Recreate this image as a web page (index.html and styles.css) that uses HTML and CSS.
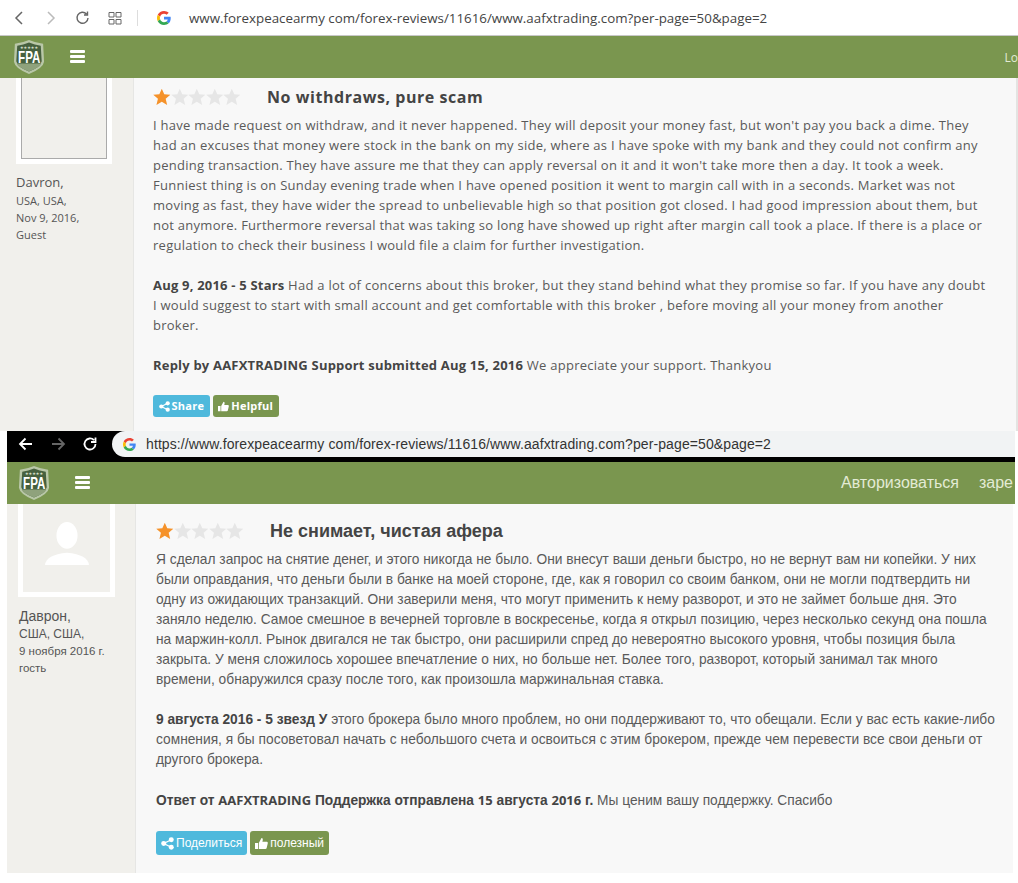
FILE: index.html
```html
<!DOCTYPE html>
<html lang="en">
<head>
  <meta charset="UTF-8">
  <title>Forex Peace Army reviews</title>
  <link rel="stylesheet" href="styles.css">
</head>
<body>
<svg class="defs">
  <symbol id="shield" viewBox="0 0 34 38">
    <path d="M2 5 Q10 4 17 1 Q24 4 32 5 L33 24 Q32 31 17 37 Q2 31 1 24 Z" fill="#b9c7a8"/>
    <path d="M4.500 7 Q11 6 17 3.500 Q23 6 29.500 7 L30.500 23.500 Q29.500 29.500 17 34.500 Q4.500 29.500 3.500 23.500 Z" fill="#46603f"/>
    <path d="M4 26 H30 L28.500 28.500 Q24 31.500 17 34.500 Q10 31.500 5.500 28.500 Z" fill="#8fa27c"/>
  </symbol>
  <symbol id="star" viewBox="0 0 20 20">
    <path d="M10 0.500 L12.800 6.900 L19.700 7.500 L14.400 12 L16.100 19 L10 15.300 L3.900 19 L5.600 12 L0.300 7.500 L7.200 6.900 Z"/>
  </symbol>
  <symbol id="share" viewBox="0 0 12 12">
    <circle cx="9.500" cy="2.500" r="2.300"/><circle cx="2.500" cy="6" r="2.300"/><circle cx="9.500" cy="9.500" r="2.300"/>
    <path d="M9.500 2.500 L2.500 6 L9.500 9.500" fill="none" stroke="currentColor" stroke-width="1.200"/>
  </symbol>
  <symbol id="thumb" viewBox="0 0 13 12">
    <path d="M0 5.500 H3 V11.500 H0 Z M3.800 5.500 L6.500 0.500 Q8.200 0.600 7.800 2.600 L7.400 4.300 H12 Q13 4.600 12.800 5.800 L11.600 10.800 Q11.300 11.500 10.400 11.500 H3.800 Z"/>
  </symbol>
  <symbol id="google" viewBox="0 0 48 48">
    <path fill="#ea4335" d="M24 9.500c3.500 0 6.700 1.200 9.200 3.600l6.900-6.900C35.900 2.400 30.500 0 24 0 14.600 0 6.500 5.400 2.600 13.200l8 6.200C12.400 13.700 17.700 9.500 24 9.500z"/>
    <path fill="#4285f4" d="M47 24.500c0-1.600-.1-3.100-.4-4.500H24v9h12.900c-.6 3-2.200 5.500-4.700 7.200l7.700 6C44.400 38 47 31.800 47 24.500z"/>
    <path fill="#fbbc05" d="M10.600 28.600c-.5-1.400-.8-3-.8-4.600s.3-3.200.8-4.600l-8-6.200C.9 16.500 0 20.100 0 24s.9 7.500 2.600 10.800l8-6.200z"/>
    <path fill="#34a853" d="M24 48c6.500 0 11.900-2.100 15.900-5.800l-7.700-6c-2.200 1.400-4.900 2.300-8.200 2.300-6.300 0-11.600-4.200-13.400-9.900l-8 6.200C6.500 42.600 14.600 48 24 48z"/>
  </symbol>
</svg>

<section class="shot shot-en">
  <div class="chrome-light">
    <svg class="tool" viewBox="0 0 16 16"><path d="M11 2 L5 8 L11 14" fill="none" stroke="#666" stroke-width="1.500"/></svg>
    <svg class="tool gap-forward" viewBox="0 0 16 16"><path d="M5 2 L11 8 L5 14" fill="none" stroke="#bbb" stroke-width="1.500"/></svg>
    <svg class="tool gap-reload" viewBox="0 0 16 16"><path d="M13 8 A5.500 5.500 0 1 1 11.500 4 M12.500 1.500 V5 H9" fill="none" stroke="#666" stroke-width="1.400"/></svg>
    <svg class="tool gap-apps" viewBox="0 0 16 16"><path d="M2 2.500 H7 V7 H2 Z M9 2.500 H14 V7 H9 Z M2 9.500 H7 V14 H2 Z M9 9.500 H14 V14 H9 Z" fill="none" stroke="#666"/></svg>
    <span class="divider"></span>
    <svg class="g-logo"><use href="#google"/></svg>
    <span class="url">www.forexpeacearmy com/forex-reviews/11616/www.aafxtrading.com?per-page=50&amp;page=2</span>
  </div>
  <nav class="topnav">
    <div class="logo"><svg class="logo-shield"><use href="#shield"/></svg><span class="logo-stars">★★★★★</span><span class="logo-text">FPA</span></div>
    <div class="burger"><i></i><i></i><i></i></div>
    <div class="nav-links"><span>Lo</span></div>
  </nav>
  <div class="review">
    <aside class="author">
      <div class="avatar avatar-en"><div class="avatar-inner"></div></div>
      <div class="name">Davron,</div>
      <div class="meta">USA, USA,</div>
      <div class="meta">Nov 9, 2016,</div>
      <div class="meta">Guest</div>
    </aside>
    <article class="body">
      <div class="review-head">
        <span class="stars">
          <svg class="on"><use href="#star"/></svg><svg><use href="#star"/></svg><svg><use href="#star"/></svg><svg><use href="#star"/></svg><svg><use href="#star"/></svg>
        </span>
        <h3>No withdraws, pure scam</h3>
      </div>
      <p>I have made request on withdraw, and it never happened. They will deposit your money fast, but won't pay you back a dime. They<br>
      had an excuses that money were stock in the bank on my side, where as I have spoke with my bank and they could not confirm any<br>
      pending transaction. They have assure me that they can apply reversal on it and it won't take more then a day. It took a week.<br>
      Funniest thing is on Sunday evening trade when I have opened position it went to margin call with in a seconds. Market was not<br>
      moving as fast, they have wider the spread to unbelievable high so that position got closed. I had good impression about them, but<br>
      not anymore. Furthermore reversal that was taking so long have showed up right after margin call took a place. If there is a place or<br>
      regulation to check their business I would file a claim for further investigation.</p>
      <p><b>Aug 9, 2016 - 5 Stars</b> Had a lot of concerns about this broker, but they stand behind what they promise so far. If you have any doubt<br>
      I would suggest to start with small account and get comfortable with this broker , before moving all your money from another<br>
      broker.</p>
      <p><b>Reply by AAFXTRADING Support submitted Aug 15, 2016</b> We appreciate your support. Thankyou</p>
      <div class="actions">
        <span class="btn btn-share"><svg><use href="#share"/></svg>Share</span>
        <span class="btn btn-helpful"><svg><use href="#thumb"/></svg>Helpful</span>
      </div>
    </article>
  </div>
</section>

<section class="shot shot-ru">
  <div class="chrome-dark">
    <svg class="tool" viewBox="0 0 16 16"><path d="M14 8 H2 M7.500 2.500 L2 8 L7.500 13.500" fill="none" stroke="#fff" stroke-width="1.800"/></svg>
    <svg class="tool gap-forward-dark" viewBox="0 0 16 16"><path d="M2 8 H14 M8.500 2.500 L14 8 L8.500 13.500" fill="none" stroke="#666" stroke-width="1.800"/></svg>
    <svg class="tool gap-reload-dark" viewBox="0 0 16 16"><path d="M13.500 8 A5.500 5.500 0 1 1 12 4.200 M13.500 1.500 V6 H9" fill="none" stroke="#fff" stroke-width="1.800"/></svg>
    <div class="omnibox">
      <svg class="g-logo-dark"><use href="#google"/></svg>
      <span class="url-dark">https://www.forexpeacearmy com/forex-reviews/11616/www.aafxtrading.com?per-page=50&amp;page=2</span>
    </div>
  </div>
  <nav class="topnav">
    <div class="logo"><svg class="logo-shield"><use href="#shield"/></svg><span class="logo-stars">★★★★★</span><span class="logo-text">FPA</span></div>
    <div class="burger"><i></i><i></i><i></i></div>
    <div class="nav-links nav-links-ru"><span>Авторизоваться</span><span>заре</span></div>
  </nav>
  <div class="review">
    <aside class="author">
      <div class="avatar avatar-ru">
        <div class="avatar-inner">
          <svg class="silhouette" viewBox="0 0 48 48"><ellipse cx="24" cy="15" rx="11" ry="14" fill="#fff"/><path d="M1 46 Q2 35 24 33 Q46 35 47 46 Z" fill="#fff"/></svg>
        </div>
      </div>
      <div class="name">Даврон,</div>
      <div class="meta">США, США,</div>
      <div class="meta meta-small">9 ноября 2016 г.</div>
      <div class="meta meta-small">гость</div>
    </aside>
    <article class="body">
      <div class="review-head">
        <span class="stars">
          <svg class="on"><use href="#star"/></svg><svg><use href="#star"/></svg><svg><use href="#star"/></svg><svg><use href="#star"/></svg><svg><use href="#star"/></svg>
        </span>
        <h3>Не снимает, чистая афера</h3>
      </div>
      <p>Я сделал запрос на снятие денег, и этого никогда не было. Они внесут ваши деньги быстро, но не вернут вам ни копейки. У них<br>
      были оправдания, что деньги были в банке на моей стороне, где, как я говорил со своим банком, они не могли подтвердить ни<br>
      одну из ожидающих транзакций. Они заверили меня, что могут применить к нему разворот, и это не займет больше дня. Это<br>
      заняло неделю. Самое смешное в вечерней торговле в воскресенье, когда я открыл позицию, через несколько секунд она пошла<br>
      на маржин-колл. Рынок двигался не так быстро, они расширили спред до невероятно высокого уровня, чтобы позиция была<br>
      закрыта. У меня сложилось хорошее впечатление о них, но больше нет. Более того, разворот, который занимал так много<br>
      времени, обнаружился сразу после того, как произошла маржинальная ставка.</p>
      <p><b>9 августа 2016 - 5 звезд У</b> этого брокера было много проблем, но они поддерживают то, что обещали. Если у вас есть какие-либо<br>
      сомнения, я бы посоветовал начать с небольшого счета и освоиться с этим брокером, прежде чем перевести все свои деньги от<br>
      другого брокера.</p>
      <p><b>Ответ от <span class="latin">AAFXTRADING</span> Поддержка отправлена <span class="latin">15</span> августа <span class="latin">2016</span> г.</b> Мы ценим вашу поддержку. Спасибо</p>
      <div class="actions">
        <span class="btn btn-share"><svg><use href="#share"/></svg>Поделиться</span>
        <span class="btn btn-helpful"><svg><use href="#thumb"/></svg>полезный</span>
      </div>
    </article>
  </div>
</section>
</body>
</html>
```
FILE: styles.css
```css
html, body {
  margin: 0;
  padding: 0;
  height: 883px;
  overflow: hidden;
  background: #fff;
}
.defs {
  display: none;
}

/* browser bars */
.chrome-light {
  height: 35px;
  display: flex;
  align-items: center;
  padding-left: 11px;
  background: #fff;
  border-bottom: 1px solid #c8c8c8;
}
.tool {
  width: 16px;
  height: 16px;
  flex-shrink: 0;
}
.gap-forward {
  margin-left: 16px;
}
.gap-reload {
  margin-left: 16px;
}
.gap-apps {
  margin-left: 16px;
}
.divider {
  width: 1px;
  height: 16px;
  margin-left: 14px;
  background: #ddd;
}
.g-logo {
  width: 14px;
  height: 14px;
  margin-left: 19px;
}
.url {
  margin-left: 18px;
  font: 13.35px "Open Sans", sans-serif;
  color: #444;
  white-space: nowrap;
}
.chrome-dark {
  height: 31px;
  display: flex;
  align-items: flex-start;
  background: #000;
  padding-left: 11px;
}
.chrome-dark .tool {
  margin-top: 5px;
}
.gap-forward-dark {
  margin-left: 16px;
}
.gap-reload-dark {
  margin-left: 16px;
}
.omnibox {
  height: 26px;
  width: 903px;
  margin-left: 14px;
  display: flex;
  align-items: center;
  background: #f1f3f4;
  border-radius: 13px 0 0 13px;
}
.g-logo-dark {
  width: 13px;
  height: 13px;
  margin-left: 11px;
}
.url-dark {
  margin-left: 10px;
  font: 14px "Liberation Sans", sans-serif;
  letter-spacing: 0.1px;
  color: #333;
  white-space: nowrap;
}

/* green nav */
.topnav {
  height: 42px;
  display: flex;
  align-items: center;
  background: #7a964f;
  overflow: hidden;
}
.logo {
  position: relative;
  width: 32px;
  height: 36px;
  margin-left: 13px;
  flex-shrink: 0;
}
.logo-shield {
  width: 32px;
  height: 36px;
}
.logo-stars {
  position: absolute;
  top: 6px;
  left: 0;
  width: 32px;
  text-align: center;
  font: 4px "DejaVu Sans", sans-serif;
  color: #dfe6d5;
}
.logo-text {
  position: absolute;
  top: 9px;
  left: 0;
  width: 32px;
  text-align: center;
  font: bold 17px "Liberation Sans", sans-serif;
  color: #fff;
  transform: scaleX(0.68);
}
.burger {
  width: 15px;
  margin-left: 25px;
  flex-shrink: 0;
}
.burger i {
  display: block;
  height: 3px;
  margin-bottom: 2px;
  background: #fff;
  border-radius: 1px;
}
.nav-links {
  margin-left: auto;
  flex-shrink: 0;
  white-space: nowrap;
  font: 12px "Open Sans", sans-serif;
  color: #e3ebd5;
}
.nav-links-ru {
  padding-right: 2px;
  font: 16px "Liberation Sans", sans-serif;
}
.nav-links-ru span + span {
  margin-left: 20px;
}

/* review card */
.review {
  display: flex;
  background: #f1f0ec;
}
.author {
  width: 117px;
  padding-left: 16px;
  flex-shrink: 0;
  font-family: "Open Sans", sans-serif;
  color: #555;
}
.avatar {
  width: 96px;
  padding: 0 5px 5px;
  box-sizing: border-box;
  background: #fff;
}
.avatar-inner {
  height: 80px;
  background: #f1f0ec;
}
.avatar-en .avatar-inner {
  border: 1px solid #aaa;
  border-top: 0;
}
.avatar-ru {
  width: 97px;
  height: 93px;
  margin-left: -5px;
}
.avatar-ru .avatar-inner {
  height: 88px;
  display: flex;
  align-items: center;
  justify-content: center;
}
.silhouette {
  width: 46px;
  height: 50px;
  margin-bottom: 8px;
}
.name {
  margin-top: 9px;
  font-size: 13px;
  line-height: 19px;
}
.meta {
  font-size: 11px;
  line-height: 17px;
}
.body {
  flex: 1;
  box-sizing: border-box;
  height: 353px;
  padding: 8px 0 0 19px;
  background: #f8f8f8;
  border-left: 1px solid #e6e6e4;
  border-right: 2px solid #e4e4e2;
  font: 13px/20px "Open Sans", sans-serif;
  letter-spacing: 0.26px;
  color: #5a5a5a;
  white-space: nowrap;
  overflow: hidden;
}
.body p {
  margin: 0 0 20px;
}
.body b {
  color: #444;
  letter-spacing: 0.2px;
}
.review-head {
  display: flex;
  align-items: center;
  height: 22px;
  margin-bottom: 7px;
}
.stars {
  display: flex;
  width: 114px;
}
.stars svg {
  width: 17.6px;
  height: 18px;
  fill: #e6e6e6;
}
.stars svg.on {
  fill: #f5922a;
}
h3 {
  margin: 0;
  font: bold 16px "Open Sans", sans-serif;
  letter-spacing: 0.55px;
  color: #444;
}
.actions {
  display: flex;
  gap: 3px;
  margin-top: 2px;
}
.btn {
  display: flex;
  align-items: center;
  gap: 2px;
  height: 22px;
  padding: 0 5.5px;
  border-radius: 3px;
  font-size: 11px;
  font-weight: bold;
  color: #fff;
}
.btn svg {
  width: 11px;
  height: 11px;
  fill: currentColor;
}
.btn-share {
  background: #4fb9dc;
}
.btn-helpful {
  background: #7a964f;
}

/* translated copy, pasted underneath */
.shot-ru {
  margin: 0 3px 0 7px;
}
.shot-ru .review {
  height: 369px;
}
.shot-ru .logo {
  margin-left: 11px;
}
.shot-ru .body {
  height: 369px;
  padding-top: 16px;
  padding-left: 20px;
  border-right: 2px solid #fff;
  font-family: "Liberation Sans", sans-serif;
  font-size: 13.75px;
  letter-spacing: 0;
}
.shot-ru .body b {
  letter-spacing: 0;
}
.shot-ru .author {
  font-family: "Liberation Sans", sans-serif;
  width: 128px;
  padding-left: 0;
}
.shot-ru .avatar {
  margin-left: 11px;
}
.shot-ru .name,
.shot-ru .meta {
  margin-left: 12px;
}
.shot-ru .name {
  margin-top: 10px;
  font-size: 14px;
}
.shot-ru .meta {
  font-size: 12px;
}
.shot-ru .meta-small {
  font-size: 11.5px;
}
.shot-ru h3 {
  font-family: "Liberation Sans", sans-serif;
  font-size: 18px;
  letter-spacing: 0;
}
.shot-ru .review-head {
  margin-bottom: 8px;
}
.shot-ru .actions {
  margin-top: 1px;
}
.shot-ru .btn {
  height: 24px;
  padding: 0 5px;
  font-size: 12px;
  font-weight: normal;
}
.shot-ru .btn svg {
  width: 13px;
  height: 13px;
}
.latin {
  font-family: "Open Sans", sans-serif;
  font-size: 13px;
}
```
